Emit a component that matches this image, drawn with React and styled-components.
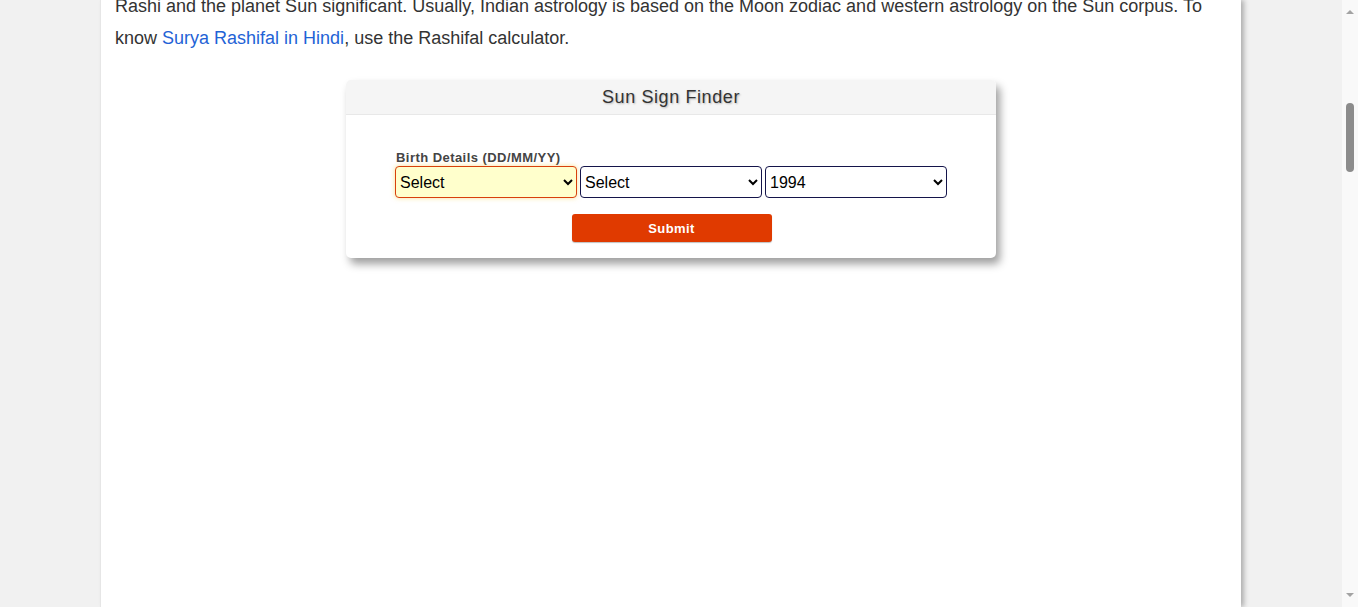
import React from "react";
import styled, { createGlobalStyle } from "styled-components";

const GlobalStyle = createGlobalStyle`
  html, body {
    margin: 0;
    padding: 0;
    height: 607px;
    overflow: hidden;
    background: #f1f1f1;
    font-family: "Liberation Sans", Arial, sans-serif;
  }
`;

const Page = styled.div`
  display: flex;
  height: 607px;
`;

const Main = styled.div`
  flex: 1;
  padding-left: 101px;
  padding-right: 101px;
`;

const Content = styled.div`
  width: 1140px;
  height: 607px;
  background: #fff;
  box-sizing: border-box;
  padding: 0 14px;
  box-shadow: -1px 0 0 #e6e6e6, 3px 0 5px rgba(0, 0, 0, 0.28);
  overflow: hidden;
`;

const Para = styled.p`
  margin: -10px 0 0;
  font-size: 18px;
  line-height: 32px;
  color: #333;
`;

const Link = styled.a`
  color: #1f63d6;
  text-decoration: none;
`;

const Card = styled.div`
  width: 650px;
  margin: 26px auto 0;
  background: #fff;
  border-radius: 5px;
  box-shadow: 4px 6px 9px rgba(0, 0, 0, 0.38);
  overflow: hidden;
`;

const CardHeader = styled.div`
  height: 34px;
  background: #f5f5f5;
  border-bottom: 1px solid #e8e8e8;
  display: flex;
  align-items: center;
  justify-content: center;
  font-size: 18px;
  letter-spacing: 0.6px;
  color: #333;
  text-shadow: 1px 1px 2px rgba(0, 0, 0, 0.25);
`;

const CardBody = styled.div`
  padding: 36px 48px 16px 49px;
  display: flex;
  flex-direction: column;
`;

const Label = styled.label`
  font-size: 13px;
  font-weight: bold;
  letter-spacing: 0.45px;
  color: #444;
  line-height: 14px;
  margin-left: 1px;
  margin-bottom: 1px;
`;

const SelectRow = styled.div`
  display: flex;
  gap: 3px;
`;

const Select = styled.select`
  width: 182px;
  height: 32px;
  box-sizing: border-box;
  font-family: "Liberation Sans", Arial, sans-serif;
  font-size: 16px;
  color: #000;
  padding: 0;
  border-radius: 4px;
  border: 1px solid ${(p) => (p.$active ? "#d8400c" : "#14144a")};
  background: ${(p) => (p.$active ? "#ffffcc" : "#fff")};
  box-shadow: ${(p) => (p.$active ? "0 0 5px rgba(240, 200, 60, 0.55)" : "none")};
  outline: none;
`;

const SubmitButton = styled.button`
  align-self: center;
  margin-top: 16px;
  width: 200px;
  height: 28px;
  border: none;
  border-radius: 3px;
  background: #e03a00;
  color: #fff;
  font-family: "Liberation Sans", Arial, sans-serif;
  font-size: 13px;
  font-weight: bold;
  letter-spacing: 0.4px;
  box-shadow: 0 1px 1px rgba(0, 0, 0, 0.25);
`;

const Scrollbar = styled.div`
  width: 16px;
  background: #f9f9f9;
  display: flex;
  flex-direction: column;
  align-items: center;
`;

const Arrow = styled.div`
  width: 0;
  height: 0;
  border-left: 4px solid transparent;
  border-right: 4px solid transparent;
  ${(p) => (p.$down ? "border-top: 4px solid #a3a3a3;" : "border-bottom: 4px solid #a3a3a3;")}
  margin-top: ${(p) => (p.$down ? "auto" : "10px")};
  margin-bottom: ${(p) => (p.$down ? "10px" : "0")};
`;

const Thumb = styled.div`
  width: 8px;
  height: 69px;
  margin-top: 89px;
  border-radius: 4px;
  background: #8c8c8c;
`;

const days = ["Select", ...Array.from({ length: 31 }, (_, i) => String(i + 1))];
const months = ["Select", "Jan", "Feb", "Mar", "Apr", "May", "Jun", "Jul", "Aug", "Sep", "Oct", "Nov", "Dec"];

export default function App() {
  return (
    <>
      <GlobalStyle />
      <Page>
        <Main>
          <Content>
            <Para>
              Rashi and the planet Sun significant. Usually, Indian astrology is based on the Moon zodiac and
              western astrology on the Sun corpus. To know <Link href="#">Surya Rashifal in Hindi</Link>, use the
              Rashifal calculator.
            </Para>
            <Card>
              <CardHeader>Sun Sign Finder</CardHeader>
              <CardBody>
                <Label>Birth Details (DD/MM/YY)</Label>
                <SelectRow>
                  <Select $active defaultValue="Select">
                    {days.map((d) => (
                      <option key={d}>{d}</option>
                    ))}
                  </Select>
                  <Select defaultValue="Select">
                    {months.map((m) => (
                      <option key={m}>{m}</option>
                    ))}
                  </Select>
                  <Select defaultValue="1994">
                    <option>1994</option>
                  </Select>
                </SelectRow>
                <SubmitButton>Submit</SubmitButton>
              </CardBody>
            </Card>
          </Content>
        </Main>
        <Scrollbar>
          <Arrow />
          <Thumb />
          <Arrow $down />
        </Scrollbar>
      </Page>
    </>
  );
}
